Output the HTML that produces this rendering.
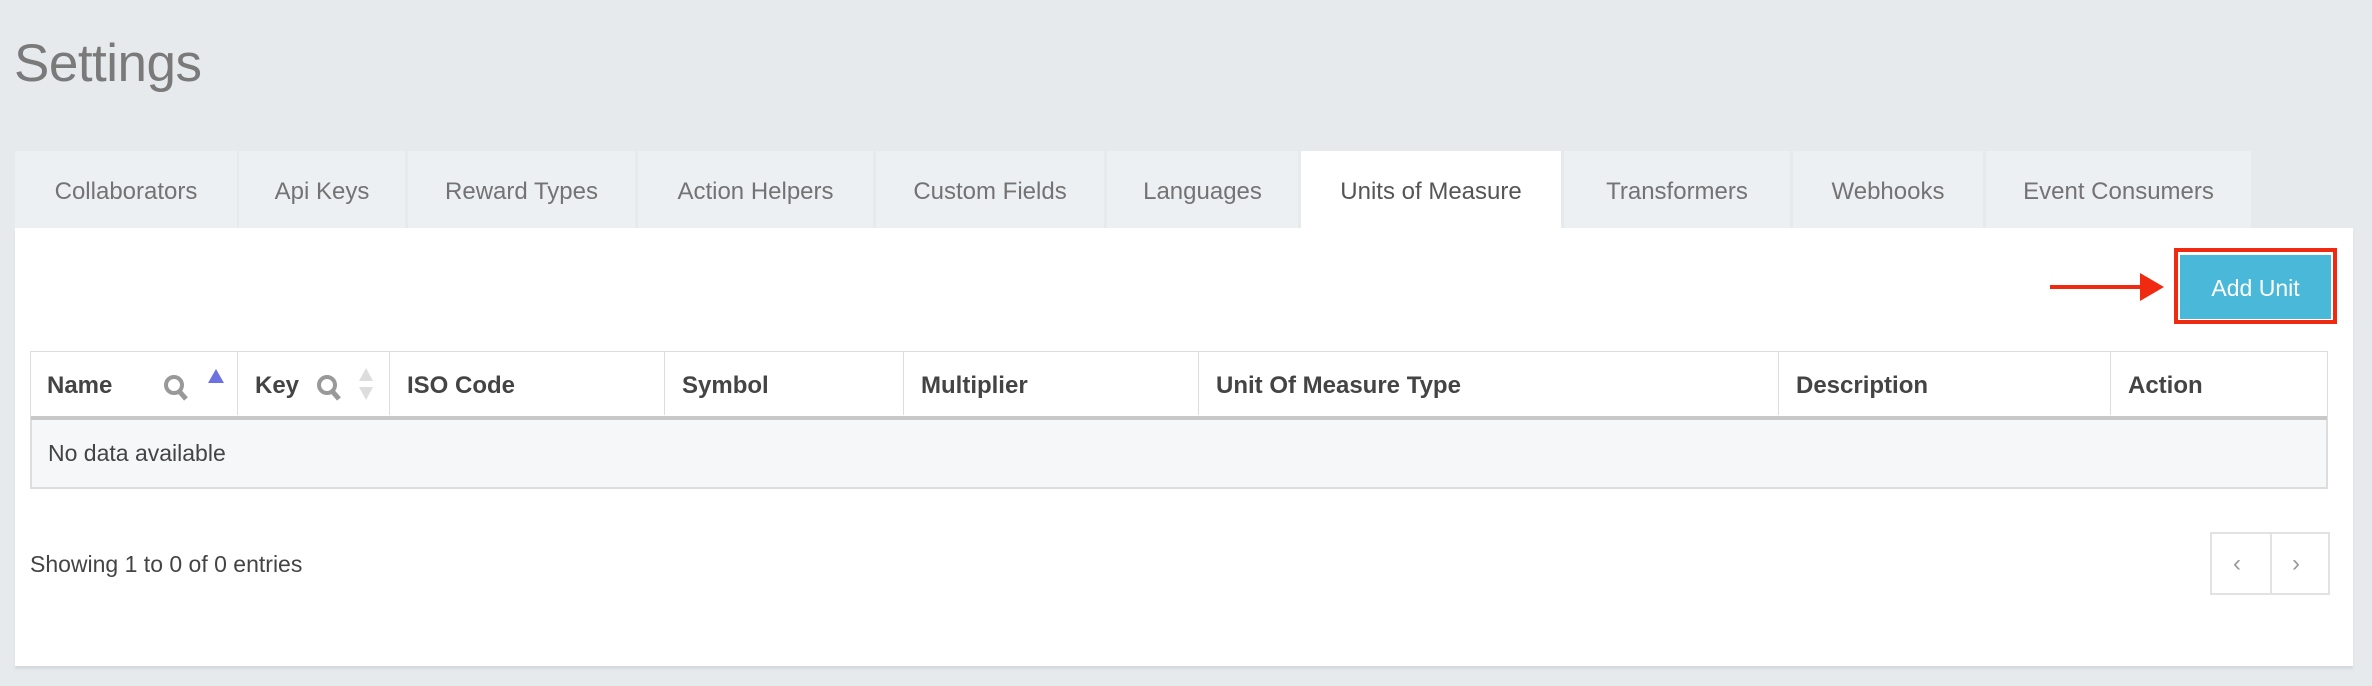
<!DOCTYPE html>
<html><head><meta charset="utf-8"><style>
*{box-sizing:border-box;margin:0;padding:0}
body{width:2372px;height:686px;background:#e7eaed;font-family:"Liberation Sans",sans-serif;position:relative;overflow:hidden}
.abs{position:absolute}
h1{position:absolute;left:14px;top:33px;font-size:53px;font-weight:normal;color:#7a7a7a;letter-spacing:-0.5px}
.tab{position:absolute;top:151px;height:77px;background:#edf0f3;color:#737373;font-size:24px;line-height:82px;text-align:center}
.tab.act{background:#fff;color:#555}
.panel{position:absolute;left:15px;top:228px;width:2338px;height:438px;background:#fff;box-shadow:0 3px 2px #d6d9dc}
.th{position:absolute;top:351px;height:64px;line-height:70px;font-size:24px;font-weight:bold;color:#444;border-left:1px solid #ddd;padding-left:17px}
</style></head><body>
<h1>Settings</h1>
<div class="tab" style="left:15px;width:222px">Collaborators</div>
<div class="tab" style="left:239px;width:166px">Api Keys</div>
<div class="tab" style="left:408px;width:227px">Reward Types</div>
<div class="tab" style="left:638px;width:235px">Action Helpers</div>
<div class="tab" style="left:876px;width:228px">Custom Fields</div>
<div class="tab" style="left:1107px;width:191px">Languages</div>
<div class="tab act" style="left:1301px;width:260px">Units of Measure</div>
<div class="tab" style="left:1564px;width:226px">Transformers</div>
<div class="tab" style="left:1793px;width:190px">Webhooks</div>
<div class="tab" style="left:1986px;width:265px">Event Consumers</div>
<div class="panel"></div>
<div class="abs" style="left:2174px;top:248px;width:163px;height:76px;border:4px solid #f02a10"></div>
<div class="abs" style="left:2180px;top:255px;width:151px;height:64px;background:#4ab9d9;color:#fff;font-size:23px;line-height:66px;text-align:center">Add Unit</div>
<div class="abs" style="left:2050px;top:285px;width:95px;height:4px;background:#f02a10"></div>
<svg class="abs" style="left:2140px;top:273px" width="26" height="28"><path d="M0 0L24 14L0 28Z" fill="#f02a10"/></svg>
<div class="abs" style="left:30px;top:351px;width:2298px;height:138px;border:2px solid #ddd;background:#f6f7f9"></div>
<div class="abs" style="left:31px;top:352px;width:2296px;height:64px;background:#fff"></div>
<div class="abs" style="left:31px;top:416px;width:2296px;height:4px;background:#c8c8c8"></div>
<div class="th" style="left:30px;width:207px;border-left:none">Name
<svg class="abs" style="left:133px;top:23px" width="28" height="28"><circle cx="11" cy="11" r="8" fill="none" stroke="#999" stroke-width="4"/><path d="M16 17L23 25" stroke="#999" stroke-width="5"/></svg>
<svg class="abs" style="left:178px;top:18px" width="16" height="14"><path d="M8 0L16 14H0Z" fill="#6c72e0"/></svg></div>
<div class="th" style="left:237px;width:152px">Key
<svg class="abs" style="left:78px;top:23px" width="28" height="28"><circle cx="11" cy="11" r="8" fill="none" stroke="#999" stroke-width="4"/><path d="M16 17L23 25" stroke="#999" stroke-width="5"/></svg>
<svg class="abs" style="left:120px;top:17px" width="16" height="32"><path d="M8 0L15 13H1Z M8 32L15 19H1Z" fill="#ddd"/></svg></div>
<div class="th" style="left:389px;width:275px">ISO Code</div>
<div class="th" style="left:664px;width:239px">Symbol</div>
<div class="th" style="left:903px;width:295px">Multiplier</div>
<div class="th" style="left:1198px;width:580px">Unit Of Measure Type</div>
<div class="th" style="left:1778px;width:332px">Description</div>
<div class="th" style="left:2110px;width:218px">Action</div>
<div class="abs" style="left:48px;top:440px;font-size:23px;color:#444">No data available</div>
<div class="abs" style="left:30px;top:551px;font-size:23px;color:#444">Showing 1 to 0 of 0 entries</div>
<div class="abs" style="left:2210px;top:532px;width:120px;height:63px;border:2px solid #e2e2e2"></div>
<div class="abs" style="left:2270px;top:533px;width:2px;height:61px;background:#e2e2e2"></div>
<div class="abs" style="left:2233px;top:550px;font-size:24px;color:#999">‹</div>
<div class="abs" style="left:2292px;top:550px;font-size:24px;color:#999">›</div>
</body></html>
